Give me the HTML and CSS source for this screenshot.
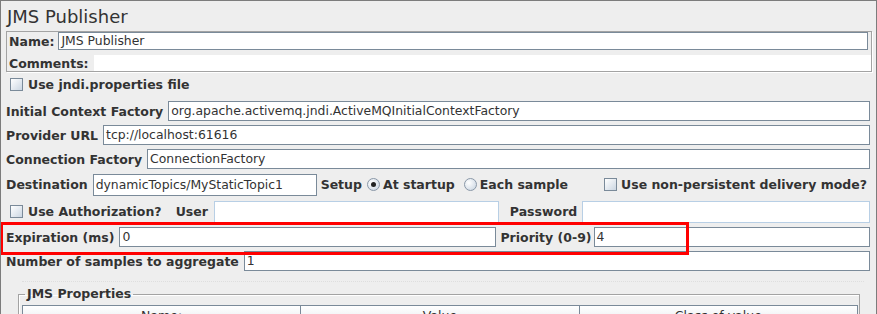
FILE: index.html
```html
<!DOCTYPE html>
<html lang="en">
<head>
    <meta charset="UTF-8">
    <title>JMS Publisher</title>
    <link rel="stylesheet" href="styles.css">
</head>
<body>
    <div class="page">
        <div class="title">JMS Publisher</div>

        <div class="name-box">
            <div class="row name-row">
                <span class="label">Name:</span>
                <span class="field grow">JMS Publisher</span>
            </div>
            <div class="row comments-row">
                <span class="label">Comments:</span>
                <span class="area"></span>
            </div>
        </div>

        <div class="row jndi-row">
            <span class="check"></span>
            <span class="label">Use jndi.properties file</span>
        </div>

        <div class="form">
            <div class="row">
                <span class="label">Initial Context Factory</span>
                <span class="field grow">org.apache.activemq.jndi.ActiveMQInitialContextFactory</span>
            </div>
            <div class="row">
                <span class="label">Provider URL</span>
                <span class="field grow">tcp://localhost:61616</span>
            </div>
            <div class="row">
                <span class="label">Connection Factory</span>
                <span class="field grow">ConnectionFactory</span>
            </div>
            <div class="row tall">
                <span class="label">Destination</span>
                <span class="field dest">dynamicTopics/MyStaticTopic1</span>
                <span class="label setup">Setup</span>
                <span class="radio on"></span>
                <span class="label opt">At startup</span>
                <span class="radio"></span>
                <span class="label opt">Each sample</span>
                <span class="check persist"></span>
                <span class="label">Use non-persistent delivery mode?</span>
            </div>
            <div class="row tall">
                <span class="check auth"></span>
                <span class="label opt">Use Authorization?</span>
                <span class="label user">User</span>
                <span class="field off user-field"></span>
                <span class="label pass">Password</span>
                <span class="field off grow"></span>
            </div>
            <div class="row">
                <span class="label">Expiration (ms)</span>
                <span class="field expire">0</span>
                <span class="label prio">Priority (0-9)</span>
                <span class="field grow">4</span>
            </div>
            <div class="row">
                <span class="label">Number of samples to aggregate</span>
                <span class="field grow">1</span>
            </div>
        </div>

        <div class="dots"></div>

        <fieldset class="props">
            <legend>JMS Properties</legend>
            <div class="table-head">
                <span>Name:</span>
                <span>Value</span>
                <span>Class of value</span>
            </div>
        </fieldset>

        <div class="highlight"></div>
    </div>
</body>
</html>
```

FILE: styles.css
```css
body {
    margin: 0;
    font-family: "DejaVu Sans", sans-serif;
    font-size: 12.5px;
    color: #333;
}
.page {
    position: relative;
    width: 877px;
    height: 314px;
    box-sizing: border-box;
    overflow: hidden;
    background-color: #eeeeee;
    border-top: 1px solid #7c7c7c;
    border-left: 1px solid #7c7c7c;
    border-right: 1px solid #7c7c7c;
    padding: 0 6px 0 5px;
}
.title {
    height: 30px;
    line-height: 32px;
    font-size: 18px;
    padding-left: 1px;
}
.row {
    display: flex;
    align-items: center;
    height: 20px;
}
.label {
    font-weight: bold;
    white-space: nowrap;
    margin-right: 5px;
}
.field {
    flex: none;
    height: 20px;
    box-sizing: border-box;
    border: 1px solid #7a8a99;
    background-color: white;
    padding: 0 2px;
    line-height: 18px;
    font-size: 12.4px;
    white-space: nowrap;
    overflow: hidden;
}
.field.off {
    border-color: #b8cfe5;
}
.field.grow {
    flex: 1;
}
.name-box {
    margin-right: -2px;
    border: 1px solid #a3a3a3;
    box-shadow: 1px 1px 0 white;
    padding-left: 2px;
}
.name-row {
    height: 18px;
}
.name-row .field {
    height: 18px;
    line-height: 16px;
    margin-right: 3px;
    margin-left: -1px;
}
.comments-row {
    height: 16px;
    margin-top: 5px;
}
.area {
    flex: 1;
    height: 16px;
    background-color: white;
}
.jndi-row {
    margin-top: 2px;
}
.check {
    flex: none;
    width: 13px;
    height: 13px;
    box-sizing: border-box;
    border: 1px solid #7a8a99;
    background: linear-gradient(135deg, #ffffff, #cbd6e2);
    margin: 0 5px 0 4px;
}
.form {
    margin-top: 7px;
    display: flex;
    flex-direction: column;
    gap: 4px;
}
.row.tall {
    height: 23px;
}
.row.tall .field {
    height: 22px;
    line-height: 20px;
}
.dest {
    width: 224px;
}
.setup {
    margin-left: 4px;
    margin-right: 5px;
}
.radio {
    flex: none;
    width: 13px;
    height: 13px;
    box-sizing: border-box;
    border: 1px solid #8a98a8;
    border-radius: 50%;
    background: radial-gradient(circle at 35% 35%, #ffffff, #c6d2df);
    margin-right: 3px;
    display: flex;
    align-items: center;
    justify-content: center;
}
.radio.on::after {
    content: "";
    width: 5px;
    height: 5px;
    border-radius: 50%;
    background-color: #222;
}
.opt {
    margin-right: 9px;
}
.persist {
    margin-left: 27px;
    margin-right: 4px;
}
.auth {
    margin-right: 5px;
}
.user {
    margin-left: 5px;
    margin-right: 6px;
}
.user-field {
    width: 285px;
}
.pass {
    margin-left: 11px;
    margin-right: 5px;
}
.expire {
    width: 377px;
}
.prio {
    margin-left: 4px;
    margin-right: 2px;
}
.dots {
    height: 0;
    margin: 10px 6px 0 16px;
    border-top: 1px dotted #dedede;
}
.props {
    margin: 5px 10px 0 12px;
    padding: 0 1px 0 3px;
    border: 1px solid #a3a3a3;
    box-shadow: inset 1px 1px 0 white;
}
.props legend {
    font-weight: bold;
    padding: 0 2px;
    margin-left: 3px;
    line-height: 14px;
}
.table-head {
    display: flex;
    margin-top: 4px;
    border: 1px solid #7a8a99;
    background: linear-gradient(#ffffff, #e4e8ec);
}
.table-head span {
    flex: 1;
    text-align: center;
    height: 20px;
    line-height: 20px;
    border-left: 1px solid #7a8a99;
}
.table-head span:first-child {
    border-left: none;
}
.highlight {
    position: absolute;
    left: -1px;
    top: 221px;
    width: 689px;
    height: 33px;
    box-sizing: border-box;
    border: 3px solid #ff0000;
}
```
